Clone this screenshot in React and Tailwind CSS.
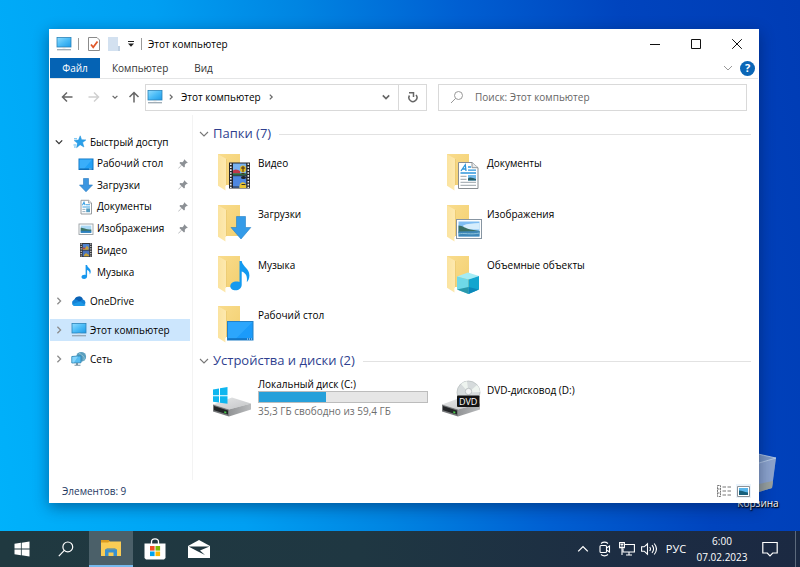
import React from 'react';

/* ---------- Small shared glyphs ---------- */

function Chevron({ dir = 'down', className = 'h-2 w-2', width = 1.4 }) {
  const paths = {
    down: 'M1 3 L5 7 L9 3',
    right: 'M3 1 L7 5 L3 9',
    up: 'M1 7 L5 3 L9 7',
  };
  return (
    <svg viewBox="0 0 10 10" className={className} fill="none" stroke="currentColor" strokeWidth={width} aria-hidden="true">
      <path d={paths[dir]} />
    </svg>
  );
}

function ComputerIcon({ className = 'h-4 w-4' }) {
  return (
    <svg viewBox="0 0 16 16" className={className} aria-hidden="true">
      <defs>
        <linearGradient id="screen" x1="0" y1="0" x2="1" y2="1">
          <stop offset="0" stopColor="#8fdcff" />
          <stop offset="0.5" stopColor="#4bbcf7" />
          <stop offset="1" stopColor="#1e9be8" />
        </linearGradient>
      </defs>
      <rect x="1" y="1.5" width="14" height="9.5" fill="url(#screen)" stroke="#2b83b8" strokeWidth="0.8" />
      <path d="M6.5 11.2h3v1h-3z" fill="#b7c4cc" />
      <path d="M1 13.2h14v1.1H1z" fill="#8b9aa5" />
    </svg>
  );
}

/* ---------- Navigation pane icons ---------- */

const StarIcon = () => (
  <svg viewBox="0 0 16 16" className="h-4 w-4" aria-hidden="true">
    <path d="M9.2 1.8l1.4 3.9 4.3.2-3.3 2.700 1.300 4.400-3.800-2.300-3.500 3 .8-4.600-3.200-2.500 4.300-.5z" fill="#2aa0ea" stroke="#1f8fd8" strokeWidth="0.5" />
    <path d="M3 4.800h3M2.500 11h2.500M3 13h1.800" stroke="#58b6ee" strokeWidth="1" />
  </svg>
);

const DesktopIcon = () => (
  <svg viewBox="0 0 16 16" className="h-4 w-4" aria-hidden="true">
    <rect x="1" y="3" width="14" height="10.5" fill="#22a1f7" stroke="#1177c4" strokeWidth="1" />
    <path d="M1.5 3.5h12.5L6 13H1.5z" fill="#4bb7fb" opacity="0.6" />
    <path d="M1.5 13h13" stroke="#0c66ad" strokeWidth="1" />
    <path d="M11 13h3" stroke="#bfe4ff" strokeWidth="0.8" strokeDasharray="0.8 0.4" />
  </svg>
);

const ArrowIcon = () => (
  <svg viewBox="0 0 16 16" className="h-4 w-4" aria-hidden="true">
    <path d="M5.5 1.5h5v6.5h4L8 14.8 1.5 8h4z" fill="#3c96e0" stroke="#2577bf" strokeWidth="0.6" />
  </svg>
);

const DocumentIcon = () => (
  <svg viewBox="0 0 16 16" className="h-4 w-4" aria-hidden="true">
    <path d="M3 1.3h7.6L13.5 4v11H3z" fill="#fff" stroke="#8c9296" strokeWidth="0.9" />
    <path d="M10.5 1.3V4h3" fill="#e6e9eb" stroke="#8c9296" strokeWidth="0.7" />
    <path d="M4.4 6.2 6 3.2l1 3M7.8 5.8H12M4.4 8h7.6" stroke="#3ba1e4" strokeWidth="1.1" fill="none" />
    <path d="M4.4 10.4h3M4.4 12.6h3" stroke="#8da8ba" strokeWidth="0.9" />
    <rect x="8.2" y="9.4" width="3.8" height="3.8" fill="#579fc4" />
  </svg>
);

const PictureIcon = () => (
  <svg viewBox="0 0 16 16" className="h-4 w-4" aria-hidden="true">
    <rect x="1" y="3" width="14" height="10.5" fill="#fff" stroke="#989fa4" strokeWidth="0.9" />
    <rect x="2.7" y="4.6" width="10.600" height="7.3" fill="#a9d8f5" />
    <path d="M2.700 6.800c2.500 0 5 1.600 10.600 1.800v1.600H2.700z" fill="#3e7566" />
    <path d="M2.700 9.800h10.600v2.100H2.700z" fill="#2d7fbd" />
  </svg>
);

const FilmIcon = () => (
  <svg viewBox="0 0 16 16" className="h-4 w-4" aria-hidden="true">
    <rect x="2" y="1" width="12" height="14" fill="#34363a" />
    <path d="M3.200 1.500v13M12.800 1.500v13" stroke="#e4e4e4" strokeWidth="1.100" strokeDasharray="1.200 1.200" />
    <rect x="4.700" y="2" width="6.600" height="5.700" fill="#4f84cf" />
    <rect x="4.700" y="8.600" width="6.600" height="5.700" fill="#4a74bd" />
    <path d="M4.700 6h2.800l1-2 2 1v2.700h-5.800zM6 13l2-2 3 2v1.300H6z" fill="#c7a239" />
    <path d="M4.700 5.500h2.500v1.600H4.700z" fill="#b9484b" />
  </svg>
);

const MusicIcon = () => (
  <svg viewBox="0 0 16 16" className="h-4 w-4" aria-hidden="true">
    <path d="M7.600 1h1.500c.3 2.700 3.700 3.300 3.600 6.500 0 1.300-.5 2.200-1 2.900.4-2.700-1-3.900-2.600-4.500v6.400c0 1.700-1.400 2.700-3 2.700S3.500 14.100 3.500 13c0-1.500 1.700-2.500 4.100-2.100z" fill="#1797ee" />
  </svg>
);

const CloudIcon = () => (
  <svg viewBox="0 0 16 16" className="h-4 w-4" aria-hidden="true">
    <path d="M3.500 6.500A4.500 4.500 0 0 1 12 6.300L10 10 2 9.500z" fill="#0b62b5" />
    <path d="M11.500 6.300A3.500 3.500 0 0 1 12.300 13H4A3.300 3.300 0 0 1 3 6.700C6.500 6 7.500 8.800 9 8.500z" fill="#1482d6" />
    <path d="M1.200 11.200 9 8.400l5.700 3.500A3.300 3.300 0 0 1 12.300 13H4a3.300 3.300 0 0 1-2.800-1.800z" fill="#1c98e6" />
  </svg>
);

const NetworkIcon = () => (
  <svg viewBox="0 0 16 16" className="h-4 w-4" aria-hidden="true">
    <circle cx="10.200" cy="5.800" r="4.900" fill="#5b9fbe" />
    <path d="M8 2.500c2.500.2 2.500 2 4 2.500s1.500 3 .5 4.500" stroke="#8fc4d6" strokeWidth="1" fill="none" />
    <path d="M.8 5.500 10 4.800v7L.8 12z" fill="#56bdf2" stroke="#277fae" strokeWidth="0.800" />
    <path d="M1.300 6 7 5.500 3 11.500H1.300z" fill="#9adeff" opacity="0.700" />
    <path d="M5 12h2v1.800H5zM3.500 13.800h6v1h-6z" fill="#7592a3" />
  </svg>
);

const PinIcon = () => (
  <svg viewBox="0 0 12 12" className="h-3 w-3 shrink-0" aria-hidden="true">
    <path d="M7.200 1.200l3.600 3.600-1 .4-.5-.1-1.500 1.600.1 2-.9.900-2.300-2.300L1.600 10.600l-.4-.4 3.200-3.100-2-2.200.9-.8 2.100.1 1.500-1.500-.1-.5z" fill="#8c9095" />
  </svg>
);

/* ---------- Large tile icons ---------- */

function FolderBase({ children }) {
  return (
    <svg viewBox="0 0 42 40" className="h-10 w-[42px] shrink-0" aria-hidden="true">
      <defs>
        <linearGradient id="folderBack" x1="0" y1="0" x2="1" y2="1">
          <stop offset="0" stopColor="#f9dc8d" />
          <stop offset="1" stopColor="#f3d071" />
        </linearGradient>
        <linearGradient id="folderFlap" x1="0" y1="0" x2="1" y2="0">
          <stop offset="0" stopColor="#fbe39f" />
          <stop offset="1" stopColor="#fde9b0" />
        </linearGradient>
      </defs>
      <path d="M6 2h22v31H6z" fill="url(#folderBack)" />
      <path d="M6 2.200 14.500 7v26l-1.200 1.500.2 4L6 33.800z" fill="url(#folderFlap)" />
      <path d="M14.500 7v26" stroke="#e8c466" strokeWidth="0.700" />
      {children}
    </svg>
  );
}

const VideoFolder = () => (
  <FolderBase>
    <rect x="17" y="10.500" width="21" height="26" fill="#24262b" />
    <path d="M18.800 11.500v24.500M36.300 11.500v24.500" stroke="#f2f2f2" strokeWidth="1.600" strokeDasharray="1.600 1.300" />
    <rect x="21" y="11.500" width="13.200" height="11.700" fill="#78b2f0" />
    <rect x="21" y="24.200" width="13.200" height="11.700" fill="#4e87e0" />
    <path d="M21 18.500c3-2 5-.5 7 .5v2.500h-7z" fill="#c0384a" />
    <path d="M21 21.300h13.200v1.900H21z" fill="#2e6c3d" />
    <ellipse cx="31" cy="17" rx="3" ry="3.400" fill="#e4bc23" />
    <path d="M29 16h4M31 14v6M29.500 21.500h3" stroke="#4a2d1a" strokeWidth="1" />
    <ellipse cx="31.500" cy="25.500" rx="2.500" ry="1.600" fill="#232323" />
    <path d="M27.500 34c0-5 6.700-5 6.700 0v1.900h-6.700z" fill="#e8c32f" />
    <path d="M29.500 32.500h4M21 35h6" stroke="#2d3033" strokeWidth="1.200" />
  </FolderBase>
);

const DocumentsFolder = () => (
  <FolderBase>
    <path d="M17.500 10.500H31l6 5.200v20.800H17.500z" fill="#fff" stroke="#888d91" strokeWidth="1" />
    <path d="M31 10.500v5.200h6" fill="#e7e9eb" stroke="#888d91" strokeWidth="0.900" />
    <path d="M20 19l4.300-6.300L25 19M21.500 17h3.200M27 15h3M27 18.200h8M19.500 21h15.500" stroke="#2f97dc" strokeWidth="1.300" fill="none" />
    <path d="M19.500 24.300h6M19.500 27.300h6M19.500 30.300h15.500M19.500 33.300h15.500" stroke="#9aa3a9" strokeWidth="1" />
    <rect x="27" y="23" width="8" height="5.600" fill="#74bbeb" />
    <path d="M27 26.500c2-2 5-.5 8 .6v1.500h-8z" fill="#285f68" />
  </FolderBase>
);

const DownloadsFolder = () => (
  <FolderBase>
    <path d="M24.500 13.500h9v11h5.300L29 36 19 24.500h5.500z" fill="#349be8" stroke="#217fc7" strokeWidth="0.600" />
  </FolderBase>
);

const PicturesFolder = () => (
  <FolderBase>
    <rect x="15.500" y="16.500" width="25" height="19" fill="#fdfdfd" stroke="#8795a2" strokeWidth="1" />
    <rect x="17.500" y="18.500" width="21" height="15" fill="#7fbdf2" />
    <path d="M22 22.500c4-2 10-2 16.500-2.500v6.500H24z" fill="#d6edfc" />
    <path d="M17.500 22.500c4 0 7 3 12 4l9 1.500v2h-21z" fill="#3a6f62" />
    <path d="M17.500 28.500l21-.5v5.500h-21z" fill="#3d87b8" />
    <path d="M17.500 31c5-1.500 12 1 21-1" stroke="#8cc2da" strokeWidth="1" fill="none" />
  </FolderBase>
);

const MusicFolder = () => (
  <FolderBase>
    <path d="M27.500 7h2.200c.8 5.500 7.800 7.500 7.700 14.500 0 3-1.200 5.200-2.600 6.700.9-6-1-9.300-5.100-10.700v13.200c0 3.500-2.900 5.600-6.100 5.600-3.100 0-5.300-1.700-5.300-4.100 0-3.300 4.100-5.700 9.200-4.300z" fill="#139af0" />
  </FolderBase>
);

const ObjectsFolder = () => (
  <FolderBase>
    <path d="M16 22.500 27 18.500 38 22l-10.500 3.500z" fill="#a4ecf5" />
    <path d="M16 22.500 27.500 25.500V40L16 35.500z" fill="#6fd8e8" />
    <path d="M27.500 25.500 38 22v13.500L27.500 40z" fill="#12a5cf" />
    <path d="M16 35.500 27.500 33V40z" fill="#2a98ab" />
    <path d="M27.500 33 38 35.500 27.500 40z" fill="#0b88ba" />
  </FolderBase>
);

const DesktopFolder = () => (
  <FolderBase>
    <rect x="15.500" y="17.500" width="25.500" height="18.500" fill="#1b9bfa" stroke="#2380c7" strokeWidth="1" />
    <path d="M16 18h24.500L24 34.500h-8z" fill="#38adfd" opacity="0.600" />
    <path d="M16 35h24.500" stroke="#0f68b4" strokeWidth="1.200" />
    <path d="M35 35h5" stroke="#d3ecff" strokeWidth="1.200" strokeDasharray="1 1" />
  </FolderBase>
);

function DriveBody() {
  return (
    <>
      <defs>
        <linearGradient id="driveTop" x1="0" y1="0" x2="1" y2="1">
          <stop offset="0" stopColor="#e6e7e8" />
          <stop offset="1" stopColor="#c3c5c7" />
        </linearGradient>
        <linearGradient id="driveSide" x1="0" y1="0" x2="1" y2="0">
          <stop offset="0" stopColor="#929496" />
          <stop offset="1" stopColor="#b9bbbd" />
        </linearGradient>
      </defs>
      <path d="M1 27.500 20 20.500 39 26.500 17 32.500z" fill="url(#driveTop)" />
      <path d="M17 32.500 39 26.500v6L17 39.500z" fill="url(#driveSide)" />
      <path d="M1 27.500l16 5v7L1 34.500z" fill="#77797b" />
      <path d="M2 29l14 4.600v3.900L2 33.300z" fill="#232527" />
      <path d="M12.300 34.200l2 .6v1.700l-2-.6z" fill="#48d04b" />
    </>
  );
}

const LocalDrive = () => (
  <svg viewBox="0 0 42 40" className="h-10 w-[42px] shrink-0" aria-hidden="true">
    <DriveBody />
    <path d="M1 12.500l6-1v6.700H1zM8 11.300l7.500-1.200v8.100H8zM1 19.200h6v6.400l-6-.9zM8 19.200h7.500v7.500L8 25.700z" fill="#0fb6ef" />
  </svg>
);

const DvdDrive = () => (
  <svg viewBox="0 0 42 40" className="h-10 w-[42px] shrink-0" aria-hidden="true">
    <DriveBody />
    <circle cx="27.500" cy="15.500" r="11.500" fill="#d6dbdc" stroke="#b5bbbc" strokeWidth="0.700" />
    <path d="M27.500 15.500 20 7A11.500 11.500 0 0 1 26 4.200zM27.500 15.500 36 8a11 11 0 0 1 3 7z" fill="#eef4ef" />
    <circle cx="27.500" cy="14.500" r="3.200" fill="#f3f5f5" stroke="#b0b6b8" strokeWidth="0.800" />
    <rect x="16" y="18.500" width="22.500" height="11.500" rx="1" fill="#131313" />
    <text x="27.200" y="27.700" textAnchor="middle" fontSize="9" fill="#fff" fontFamily="Open Sans, sans-serif">DVD</text>
  </svg>
);

/* ---------- Window chrome ---------- */

function TitleBar() {
  return (
    <header className="flex h-7 items-center pr-px pl-1.5">
      <ComputerIcon className="h-4 w-4" />
      <span className="ml-1.5 h-3 w-px bg-[#9a9a9a]" />
      <button type="button" aria-label="Свойства" className="ml-2">
        <svg viewBox="0 0 14 16" className="h-4 w-3.5">
          <path d="M1.500 1.500h8.500l2.500 2.500v10.500h-11z" fill="#fff" stroke="#8b8b8b" />
          <path d="M4 8.500l2.200 2.800L10.500 5.500" fill="none" stroke="#e0582a" strokeWidth="1.800" />
        </svg>
      </button>
      <button type="button" aria-label="Новая папка" className="ml-1.5">
        <svg viewBox="0 0 14 16" className="h-4 w-3.5">
          <path d="M1 1h10v9h2v5H1z" fill="#d3e1f0" />
          <path d="M11 10h2v5h-2z" fill="#bfd0e2" />
        </svg>
      </button>
      <button type="button" aria-label="Настройка панели" className="ml-1.5">
        <svg viewBox="0 0 8 8" className="h-2 w-2">
          <path d="M1 1.500h6" stroke="#222" strokeWidth="1" />
          <path d="M1 3.500h6L4 6.800z" fill="#222" />
        </svg>
      </button>
      <span className="ml-1.5 h-3 w-px bg-[#9a9a9a]" />
      <h1 className="ml-1.5 flex-1">Этот компьютер</h1>
      <button type="button" aria-label="Свернуть" className="flex h-7 w-[41px] items-center justify-center">
        <svg viewBox="0 0 10 10" className="h-2.5 w-2.5"><path d="M0 5.500h10" stroke="#111" /></svg>
      </button>
      <button type="button" aria-label="Развернуть" className="flex h-7 w-[41px] items-center justify-center">
        <svg viewBox="0 0 10 10" className="h-2.5 w-2.5"><path d="M.5.5h9v9h-9z" fill="none" stroke="#111" /></svg>
      </button>
      <button type="button" aria-label="Закрыть" className="flex h-7 w-[41px] items-center justify-center">
        <svg viewBox="0 0 10 10" className="h-2.5 w-2.5"><path d="M.2.2l9.600 9.600M9.800.2.2 9.800" stroke="#111" /></svg>
      </button>
    </header>
  );
}

function Ribbon() {
  return (
    <nav className="flex h-[21px] items-center border-b border-[#e4e5e6] text-[#333]">
      <button type="button" className="h-full w-[50px] bg-[#0563b4] text-white">Файл</button>
      <button type="button" className="h-full px-3">Компьютер</button>
      <button type="button" className="h-full px-3.5">Вид</button>
      <button type="button" aria-label="Развернуть ленту" className="ml-auto text-[#999]">
        <Chevron className="h-2.5 w-2.5" width={1} />
      </button>
      <button type="button" aria-label="Справка" className="mr-[3px] ml-[7px] flex h-[15px] w-[15px] items-center justify-center rounded-full bg-[#0a66b7] text-[11px] font-bold text-white">?</button>
    </nav>
  );
}

function AddressRow() {
  return (
    <div className="flex h-9 items-center pr-[11px] pl-[11px] text-[#666]">
      <button type="button" aria-label="Назад">
        <svg viewBox="0 0 12 12" className="h-3 w-3" fill="none" stroke="#666" strokeWidth="1.500"><path d="M11.500 6H1.500M6 1.500 1.500 6 6 10.500" /></svg>
      </button>
      <button type="button" aria-label="Вперёд" className="ml-[15px]">
        <svg viewBox="0 0 12 12" className="h-3 w-3" fill="none" stroke="#d0d0d0" strokeWidth="1.500"><path d="M.5 6h10M6 1.500 10.500 6 6 10.500" /></svg>
      </button>
      <button type="button" aria-label="Последние места" className="ml-3">
        <Chevron className="h-1.5 w-1.5" width={2} />
      </button>
      <button type="button" aria-label="Вверх" className="ml-2.5">
        <svg viewBox="0 0 12 12" className="h-3 w-3" fill="none" stroke="#666" strokeWidth="1.500"><path d="M6 11.500V1.500M1.500 6 6 1.500 10.500 6" /></svg>
      </button>
      <div className="ml-[5px] flex h-[27px] w-[282px] items-center border border-[#d9d9d9] pl-px">
        <ComputerIcon className="h-4 w-4" />
        <Chevron dir="right" className="ml-[5px] h-1.5 w-1.5" width={2} />
        <button type="button" className="ml-[7px] text-black">Этот компьютер</button>
        <Chevron dir="right" className="ml-[7px] h-1.5 w-1.5" width={2} />
        <button type="button" aria-label="Предыдущие адреса" className="mr-2 ml-auto">
          <Chevron className="h-2 w-2" width={2} />
        </button>
        <button type="button" aria-label="Обновить" className="flex h-full w-7 items-center justify-center border-l border-[#d9d9d9]">
          <svg viewBox="0 0 12 12" className="h-3 w-3" fill="none" stroke="#666" strokeWidth="1.500">
            <path d="M9 4a4 4 0 1 1-6.500.500" />
            <path d="M2 1.800h4.500V6" />
          </svg>
        </button>
      </div>
      <label className="ml-[11px] flex h-[27px] min-w-0 flex-1 items-center gap-[11px] border border-[#d9d9d9] pl-[11px]">
        <svg viewBox="0 0 14 14" className="h-3.5 w-3.5 shrink-0" fill="none" stroke="#999" strokeWidth="1" aria-hidden="true">
          <circle cx="8.500" cy="5.500" r="4" />
          <path d="M5.600 8.400 1 13" />
        </svg>
        <input type="search" aria-label="Поиск" placeholder="Поиск: Этот компьютер" className="w-full min-w-0 bg-transparent outline-none placeholder:text-[#666]" />
      </label>
    </div>
  );
}

const quickItems = [
  { label: 'Рабочий стол', Icon: DesktopIcon, pinned: true },
  { label: 'Загрузки', Icon: ArrowIcon, pinned: true },
  { label: 'Документы', Icon: DocumentIcon, pinned: true },
  { label: 'Изображения', Icon: PictureIcon, pinned: true },
  { label: 'Видео', Icon: FilmIcon },
  { label: 'Музыка', Icon: MusicIcon },
];

function RootItem({ label, Icon, open, active }) {
  return (
    <button
      type="button"
      className={`flex h-[22px] w-full items-center pl-[5px] text-left ${active ? 'bg-[#cce6fd]' : ''}`}
    >
      <span className={open ? 'text-[#333]' : 'text-[#8c8c8c]'}>
        <Chevron dir={open ? 'down' : 'right'} className="h-2 w-2" width={1.6} />
      </span>
      <span className="ml-2"><Icon /></span>
      <span className="ml-[3px] whitespace-nowrap">{label}</span>
    </button>
  );
}

function Sidebar() {
  return (
    <aside className="flex w-[143px] shrink-0 flex-col gap-[7px] border-r border-[#f3f3f3] pt-4 pr-0.5">
      <div className="grid h-[152px] auto-rows-fr">
        <RootItem label="Быстрый доступ" Icon={StarIcon} open />
        {quickItems.map(({ label, Icon, pinned }) => (
          <button key={label} type="button" className="flex items-center pr-px pl-7 text-left">
            <Icon />
            <span className="ml-[3px] flex-1 whitespace-nowrap">{label}</span>
            {pinned && <PinIcon />}
          </button>
        ))}
      </div>
      <RootItem label="OneDrive" Icon={CloudIcon} />
      <RootItem label="Этот компьютер" Icon={ComputerIcon} active />
      <RootItem label="Сеть" Icon={NetworkIcon} />
    </aside>
  );
}

function GroupHeader({ children }) {
  return (
    <h2 className="flex h-6 items-center text-[13px] text-[#2f3f8f]">
      <span className="mr-1 text-[#777]"><Chevron className="h-2.5 w-2.5" width={1.1} /></span>
      {children}
      <span className="ml-2 h-px flex-1 bg-[#e2e2e2]" />
    </h2>
  );
}

const folders = [
  { label: 'Видео', Icon: VideoFolder },
  { label: 'Документы', Icon: DocumentsFolder },
  { label: 'Загрузки', Icon: DownloadsFolder },
  { label: 'Изображения', Icon: PicturesFolder },
  { label: 'Музыка', Icon: MusicFolder },
  { label: 'Объемные объекты', Icon: ObjectsFolder },
  { label: 'Рабочий стол', Icon: DesktopFolder },
];

function Content() {
  return (
    <main className="min-w-0 flex-1 pt-[7px] pr-[7px] pl-1.5">
      <GroupHeader>Папки (7)</GroupHeader>
      <div className="grid h-[203px] auto-rows-fr grid-cols-[repeat(auto-fill,229px)] pl-[13px]">
        {folders.map(({ label, Icon }) => (
          <button key={label} type="button" className="flex items-start gap-1 pt-1.5 text-left">
            <Icon />
            <span className="pt-[3px] leading-4">{label}</span>
          </button>
        ))}
      </div>
      <GroupHeader>Устройства и диски (2)</GroupHeader>
      <div className="grid grid-cols-[repeat(auto-fill,229px)] pt-1 pl-[13px]">
        <button type="button" className="flex items-start gap-1 text-left">
          <LocalDrive />
          <span className="block w-[170px]">
            <span className="block leading-[14px]">Локальный диск (C:)</span>
            <span role="progressbar" aria-label="Занято на диске" aria-valuenow={40} className="block h-3 border border-[#bcbcbc] bg-[#e6e6e6]">
              <span className="block h-full w-2/5 bg-[#26a0da]" />
            </span>
            <span className="block leading-4 text-[#6d6d6d]">35,3 ГБ свободно из 59,4 ГБ</span>
          </span>
        </button>
        <button type="button" className="flex items-start gap-1 text-left">
          <DvdDrive />
          <span className="pt-[5px] leading-4">DVD-дисковод (D:)</span>
        </button>
      </div>
    </main>
  );
}

function StatusBar() {
  return (
    <footer className="flex h-[22px] items-center pr-[7px] pl-3 text-[#1e3963]">
      <span className="flex-1">Элементов: 9</span>
      <button type="button" aria-label="Таблица" className="mr-1">
        <svg viewBox="0 0 16 12" className="h-3 w-4" fill="none" stroke="#777" strokeWidth="1">
          <path d="M1.500.5h3v11h-3zM1.500 4h3M1.500 8h3" strokeDasharray="2 .7" />
          <path d="M6.500 2H10M6.500 6H10M6.500 10H10M11.500 2H15M11.500 6H15M11.500 10H15" />
        </svg>
      </button>
      <button type="button" aria-label="Крупные значки" className="flex h-3.5 w-[15px] items-center justify-center bg-[#eaf3fb]">
        <svg viewBox="0 0 13 11" className="h-[11px] w-[13px]">
          <path d="M.5.5h12v10H.5z" fill="#fff" stroke="#8d9297" />
          <path d="M2 2h9v7H2z" fill="#58b5ea" />
          <path d="M2 4.500c3 0 5 1.500 9 2V9H2z" fill="#17607b" />
        </svg>
      </button>
    </footer>
  );
}

/* ---------- Desktop and taskbar ---------- */

function RecycleBin() {
  return (
    <button type="button" className="absolute right-5 bottom-[20px] flex w-[44px] flex-col items-center leading-4 text-white [text-shadow:0_1px_2px_#000,1px_1px_1px_#000]">
      <svg viewBox="0 0 40 42" className="h-[42px] w-10" aria-hidden="true">
        <path d="M3 7 20 2l18 3-4 30-14 4L7 37z" fill="#8aa5cf" opacity="0.700" />
        <path d="M21 10 38 5l-4 30-13 4z" fill="#a8b6cf" opacity="0.600" />
        <path d="M3 7 20 1l18 4-17 5z" fill="#7d98c2" stroke="#c3d4ea" strokeWidth="0.800" />
        <path d="M21 31l14-3-1 7-13 4z" fill="#9b9f91" opacity="0.800" />
      </svg>
      Корзина
    </button>
  );
}

function Taskbar() {
  return (
    <footer className="flex h-9 items-center bg-[linear-gradient(90deg,#203940_0%,#1f3742_45%,#1c2c43_80%,#1b2942_100%)] pr-1 text-white">
      <button type="button" aria-label="Пуск" className="flex h-full w-11 items-center justify-center">
        <svg viewBox="0 0 16 16" className="h-4 w-4" fill="#fff"><path d="M.5 2.700 6.900 1.800V7.600H.5zM7.700 1.700 15.500.600v7H7.700zM.5 8.400h6.400v5.800L.5 13.300zM7.700 8.400h7.800v7L7.700 14.300z" /></svg>
      </button>
      <button type="button" aria-label="Поиск" className="flex h-full w-11 items-center justify-center">
        <svg viewBox="0 0 16 16" className="h-4 w-4" fill="none" stroke="#fff" strokeWidth="1.200"><circle cx="9.800" cy="5.900" r="4.900" /><path d="M6.300 9.400.8 15.200" /></svg>
      </button>
      <button type="button" aria-label="Проводник" className="ml-px flex h-full w-11 items-center justify-center border-b-2 border-[#76b9ed] bg-[#4b6069]">
        <svg viewBox="0 0 20 18" className="h-[18px] w-5">
          <path d="M0 1h7l2 1.500h11V17H0z" fill="#f9cc55" />
          <path d="M0 1h7l2 1.500-2 1H0z" fill="#dc9c20" />
          <path d="M4 10.500h12V17h-3.500v-3.500h-5V17H4z" fill="#3890d0" />
          <path d="M4 10.500 6 9.500h8l2 1z" fill="#2d79b8" />
        </svg>
      </button>
      <button type="button" aria-label="Магазин" className="flex h-full w-11 items-center justify-center">
        <svg viewBox="0 0 22 22" className="h-[22px] w-[22px]">
          <path d="M7.500 6V3.800C7.500 1.800 9 .9 11 .9s3.500.9 3.500 2.900V6" fill="none" stroke="#fff" strokeWidth="1.300" />
          <path d="M.5 5.500h21V20l-1.500 1.500H2L.5 20z" fill="#fff" />
          <path d="M6 8h4.600v4.600H6z" fill="#ef4f25" />
          <path d="M11.500 8h4.600v4.600h-4.600z" fill="#7eb904" />
          <path d="M6 13.500h4.600v4.600H6z" fill="#02a3ee" />
          <path d="M11.500 13.500h4.600v4.600h-4.600z" fill="#fdb803" />
        </svg>
      </button>
      <button type="button" aria-label="Почта" className="flex h-full w-11 items-center justify-center">
        <svg viewBox="0 0 24 20" className="h-5 w-6">
          <path d="M1 7 12 1l11 6v12H1z" fill="#fff" />
          <path d="M1.500 7.500h21L13 11.500 18 16 10 12z" fill="#20363f" />
        </svg>
      </button>

      <div className="ml-auto flex h-full items-center">
        <button type="button" aria-label="Скрытые значки" className="flex w-[22px] justify-center"><Chevron dir="up" className="h-3 w-3" width={1.1} /></button>
        <button type="button" aria-label="Собрание" className="flex w-[22px] justify-center">
          <svg viewBox="0 0 14 16" className="h-4 w-3.5" fill="none" stroke="#fff" strokeWidth="1.100">
            <rect x="2" y="4.500" width="6.500" height="7" rx="1" /><path d="M8.500 7 11.500 5v6L8.500 9M3 2.500c2-1.500 5-1.500 7 0M3 13.500c2 1.500 5 1.500 7 0" />
          </svg>
        </button>
        <button type="button" aria-label="Сеть" className="flex w-[22px] justify-center">
          <svg viewBox="0 0 16 14" className="h-3.5 w-4" fill="none" stroke="#fff" strokeWidth="1.100">
            <path d="M6 2.500h9.400v7.500H4V6.500M7 13h6M10 10v3" /><path d="M.6.600h4.800v5H.6zM1.800 2l2.300 2.300M4.100 2 1.800 4.300M3 5.600V13" />
          </svg>
        </button>
        <button type="button" aria-label="Громкость" className="flex w-[22px] justify-center">
          <svg viewBox="0 0 16 14" className="h-3.5 w-4" fill="none" stroke="#fff" strokeWidth="1.100">
            <path d="M.6 4.800h2.600L6.500 1.800v10.400L3.200 9.200H.6zM8.700 5c1 1.300 1 2.700 0 4M11 3.200c2 2.400 2 5.200 0 7.600M13.200 1.500c2.700 3.300 2.700 7.700 0 11" />
          </svg>
        </button>
        <button type="button" className="flex w-8 justify-center text-[11px]">РУС</button>
        <button type="button" className="w-[60px] text-center leading-4">
          <time dateTime="2023-02-07T06:00"><span className="block">6:00</span><span className="block">07.02.2023</span></time>
        </button>
        <button type="button" aria-label="Уведомления" className="flex w-9 justify-center">
          <svg viewBox="0 0 16 16" className="h-4 w-4" fill="none" stroke="#fff" strokeWidth="1.200"><path d="M.8 1.500h14.400v10.500h-4.500L8 14.800 5.300 12H.8z" /></svg>
        </button>
        <span className="ml-[7px] h-full w-px bg-[#5c6a7c]" />
      </div>
    </footer>
  );
}

export default function App() {
  return (
    <div className="flex min-h-screen flex-col bg-[linear-gradient(80deg,#00b2fb_0%,#009ff2_28%,#0085e2_44%,#005fd2_62%,#0044be_80%,#003cb5_100%)] font-['Open_Sans','Noto_Sans',sans-serif] text-[10px] text-black">
      <div className="relative flex flex-1 flex-col pt-[29px] pr-[41px] pb-[28px] pl-[49px]">
        <RecycleBin />
        <section className="relative flex flex-1 flex-col border border-white bg-white shadow-[0_4px_14px_rgba(0,20,60,0.45)]">
          <TitleBar />
          <Ribbon />
          <AddressRow />
          <div className="flex flex-1">
            <Sidebar />
            <Content />
          </div>
          <StatusBar />
        </section>
      </div>
      <Taskbar />
    </div>
  );
}
